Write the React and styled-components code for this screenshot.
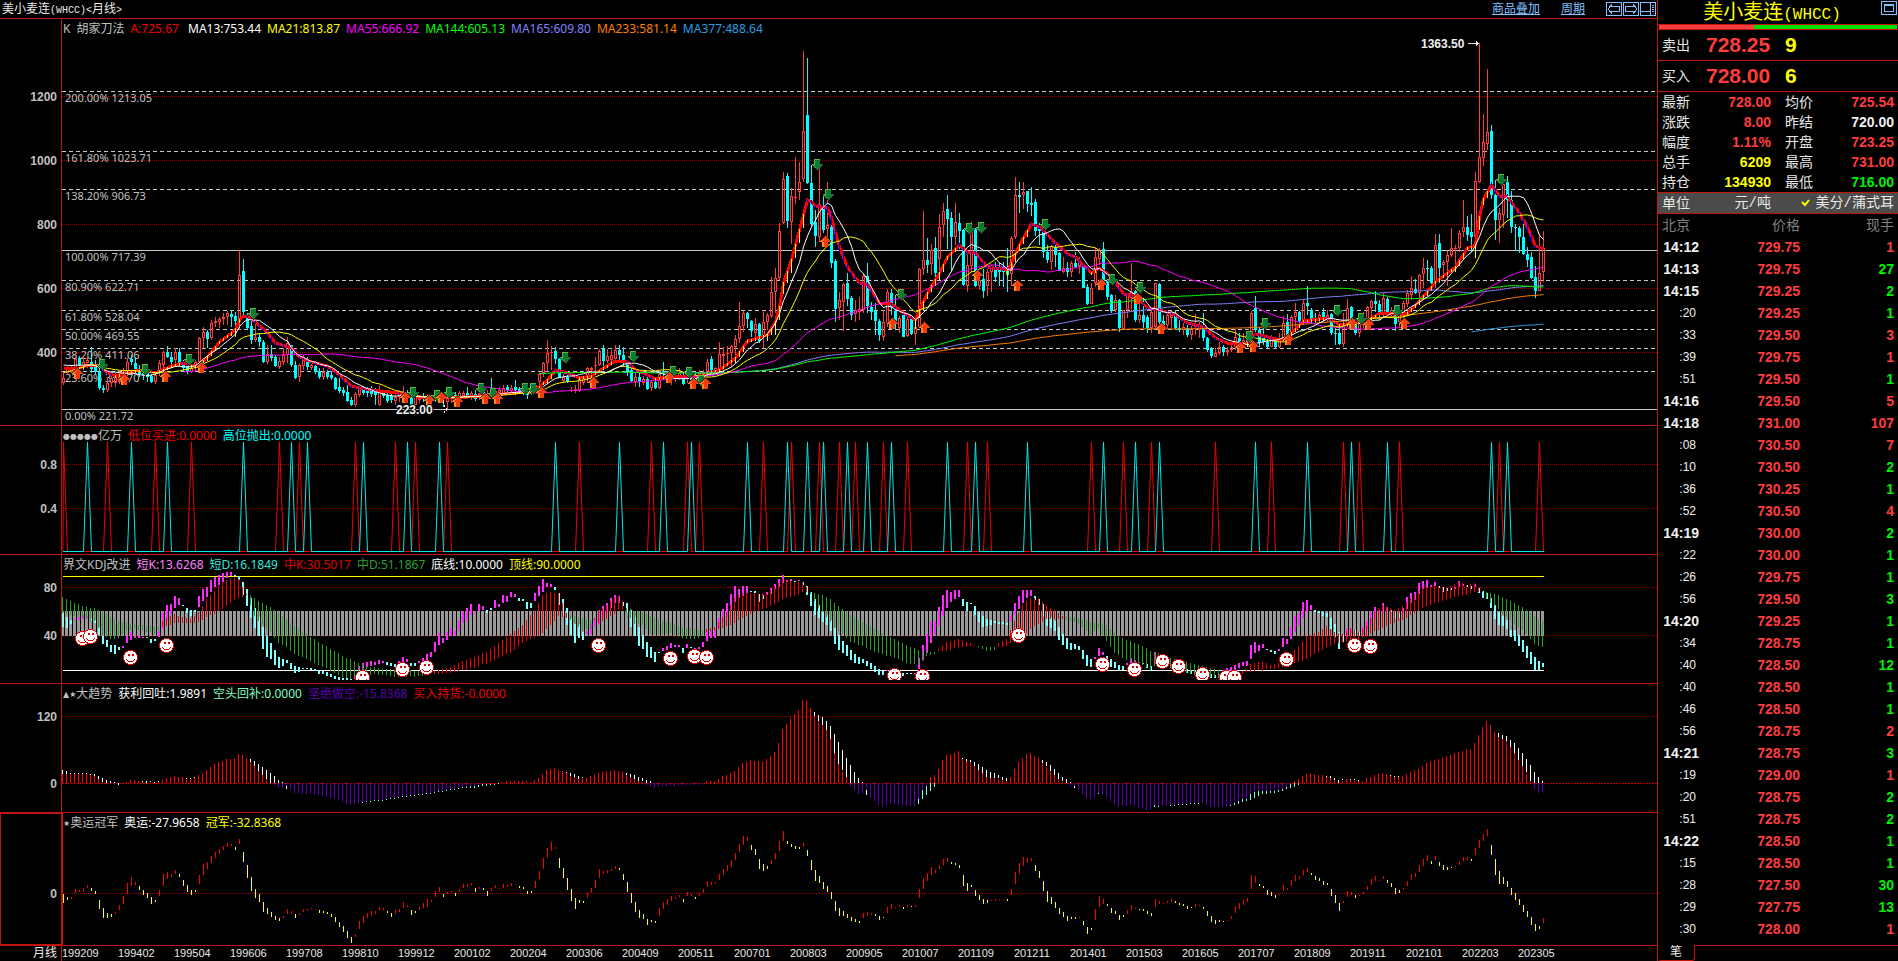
import React from "react";
import styled, { createGlobalStyle, css } from "styled-components";

/* ---------- data ---------- */

const BARS = 371;
const STEP = 4;
const AXIS_WIDTH = 62;

// colour, high, body top, body bottom, low (thirds of a pixel below `base`)
const candleParts = [
  {
    base: 240,
    text: `r395 413 430 435,r378 382 398 404,r375 380 395 400,r350 356 385 390,c348 355 375 385,r345 365 380 390,r350 360 370 385,c322 365 388 398,c360 378 395 402,c370 395 445 450,
c435 445 451 460,r410 430 450 455,r405 415 428 440,r400 410 430 440,r398 405 425 432,r385 395 420 430,r355 365 400 410,c345 357 366 375,c350 368 388 395,c375 390 402 410,
c390 395 405 420,c392 400 412 425,c395 407 425 428,r395 405 425 432,r360 370 400 408,r332 335 375 385,c318 335 352 355,c335 350 365 375,r325 337 360 372,c325 335 368 375,
c360 368 385 395,c365 375 395 402,r380 385 395 400,r360 365 385 392,r290 295 365 380,r262 277 295 325,c270 277 297 325,r240 250 295 300,r230 244 250 262,r230 238 246 265,
r218 230 238 255,r212 220 230 255,c210 222 232 262,c215 228 243 270,r31 105 245 270,c57 93 215 225,c218 225 265 270,c240 258 300 312,r250 290 300 305,c280 290 306 322,
c300 305 367 370,r315 342 365 372,c315 342 355 362,c345 352 378 380,r350 362 382 388,r325 345 365 375,r292 310 345 370,c315 315 375 380,c362 375 413 416,r372 375 412 425,
r345 360 378 390,c350 360 382 390,r365 375 383 390,c362 378 395 402,c385 392 410 418,r385 395 412 420,c390 397 410 418,c385 405 415 420,c410 415 447 450,c415 442 453 460,
c440 450 460 468,c435 455 482 485,c470 480 496 498`,
  },
  {
    base: 290,
    text: `r305 312 345 350,r290 298 315 320,c288 298 308 315,c292 300 308 320,c288 300 312 322,c295 303 315 345,r285 305 345 348,c300 305 318 325,c305 315 332 340,c308 318 330 340,
r310 322 332 345,r300 312 322 335,r288 305 318 330,c300 310 322 330,c305 320 350 352,r310 320 345 350,r315 320 330 340,c310 318 325 335,r312 320 330 345,c315 320 328 335,
c312 318 326 335,r308 318 325 338,c310 318 326 350,r315 320 335 358,r308 316 328 340,c305 315 322 330,r303 310 320 330,r303 308 318 325,c290 308 318 322,r302 310 318 330,
c300 312 328 332,r300 310 320 330,c290 305 315 325,r300 308 318 330,c265 300 315 325,r295 303 315 325,r290 300 310 318,r285 295 308 315,c285 292 300 310,r285 295 302 310,
c270 292 300 305,c290 297 303 308,c292 300 306 315,c292 300 315 328,r290 298 308 315,r278 285 302 308,r248 252 275 295,r215 220 250 260,r150 190 218 245,r168 185 190 240,
c172 184 208 222,c205 208 263 265,r240 262 272 278,c250 262 273 278,r290 299 302 306,r285 298 302 308,r262 268 302 305,r262 265 280 285,r232 235 265 280,r232 235 240 262,
r200 225 228 250,r178 182 225 228,c165 178 212 230,r178 198 212 220,r180 195 210 222,r165 180 208 215,c165 180 195 215,c172 195 218 230,c210 220 245 258,c235 240 272 275,
r250 262 275 292,c240 262 275 290`,
  },
  {
    base: 0,
    text: `r1128 1138 1148 1155,c1130 1137 1167 1170,r1140 1146 1165 1172,c1135 1146 1163 1168,r1120 1122 1163 1168,c1085 1112 1120 1130,r1115 1120 1135 1150,r1115 1125 1135 1155,
r1120 1128 1136 1145,r1105 1120 1130 1140,c1120 1128 1153 1155,r1105 1115 1135 1150,c1105 1120 1140 1150,c1118 1125 1145 1150,r1110 1120 1135 1145,r1110 1115 1130 1140,
r1077 1087 1125 1130,c1068 1077 1110 1115,r1100 1105 1115 1122,r1026 1063 1110 1115,r1040 1063 1068 1095,r1038 1058 1060 1090,r1035 1038 1058 1100,r1005 1017 1040 1090,
r906 978 1017 1030,r932 940 978 995,c935 940 956 985,c960 963 993 1010,r955 972 1000 1015,c968 972 1022 1028,r930 966 1010 1045,r940 946 965 990,r832 877 947 955,
r805 835 875 940,r670 693 835 840,r516 538 668 672,c520 528 662 684,r565 588 665 732,r471 591 593 612,r486 546 575 600,r153 394 536 545,c173 345 549 552,c495 549 672 678,
c630 667 707 740,r507 612 712 725,c585 628 690 698,r546 675 688 720,c675 682 788 805,c778 783 927 965,r876 900 925 960,r850 852 905 992,c820 849 897 917,c888 894 945 960,
r900 930 943 965,r892 928 935 960,r820 828 930 940,c790 828 918 938,c905 922 936 960,c908 932 963 1005,c958 962 1005 1022,r930 966 1010 1022,r867 877 968 980,c868 878 920 945,
c885 933 970 990,r948 955 985 998,c940 946 1010 1012,r950 957 1007 1012,c945 957 1002 1006,r972 980 1003 1034,r804 807 980 985,r633 780 808 825,c714 780 795 818,r732 750 793 825,
c711 744 820 850,r642 682 778 820,r609 633 675 712,c585 627 657 748,c636 654 711 815,r609 666 712 735,c639 669 693 748,c687 690 854 857,r762 796 858 875,r666 693 798 815,
c683 685 858 862,r825 840 857 870,c808 838 873 893,r808 815 858 888,r795 800 815 875,c785 800 830 845,c790 800 815 858,c785 800 815 862,c745 800 825 875,r708 714 823 857,
r531 585 710 717,c546 585 590 640,r546 577 584 628,c573 573 612 636,c561 609 614 648,c597 606 693 708,c670 688 694 735,c690 695 755 773,c735 755 780 790,r735 737 785 810,
c735 740 766 800,c757 760 812 812,r770 805 815 820,c785 805 815 830,r782 790 815 830,c757 790 800 805,r770 780 797 822,c790 797 863 865,c852 862 912 915,r850 865 911 912,
r745 772 850 860,r745 750 777 795,c726 747 843 870,c840 842 890 900,c882 885 932 940,r885 900 930 935,c897 900 984 995,r930 930 988 990,r880 880 930 955,r790 875 895 935,
c870 873 960 965,r905 945 960 970,c895 945 965 985,c945 950 985 998,r930 935 985 1000,r848 850 980 985,c850 853 965 980,c945 963 980 990,r940 945 975 985,r935 945 955 985,
c930 945 985 990,c960 985 990 995,r970 980 990 1005,c970 985 1005 1012,r970 985 1005 1020,r942 975 980 1005,r965 975 990 1015,c938 980 1015 1022,c1010 1015 1050 1055,
c1040 1048 1068 1074,r1045 1060 1070 1072,r1025 1042 1060 1065,c1035 1042 1055 1068,r1040 1050 1055 1068,r1030 1040 1050 1055,r988 1012 1040 1050,c1000 1015 1030 1040,
r1000 1020 1035 1045,c1000 1020 1035 1040,r932 938 1030 1035,c888 923 990 1000,c980 990 1030 1040,c985 1015 1025 1035,c1010 1025 1040 1045,r1005 1015 1040 1042,
c1010 1015 1040 1048,r1000 1015 1040 1045,r948 970 1015 1025,c942 965 1005 1015,r945 950 995 1005,r909 936 950 985,c932 935 963 985,r900 910 965 975,c858 908 918 945,
c925 930 960 970,c940 955 962 970,r935 945 958 965,c925 935 950 960,r930 945 955 965,c940 943 1000 1005,c985 998 1002 1035,c980 1000 1032 1035,r940 970 1032 1040,
r897 925 975 980,c918 922 960 975,c960 965 1000 1005,r965 970 998 1010,r935 955 975 985,r918 922 960 970,r900 903 925 965,c873 903 912 935,c900 912 940 960,r878 895 945 955,
c892 897 935 940,r920 930 945 955,c930 943 972 992,r930 940 965 980,r903 910 945 960,r870 880 912 920,r828 865 885 900,c838 868 880 882,r822 825 880 895,r774 805 822 865,
c780 805 808 840,c798 804 848 855,r702 735 850 865,c702 729 805 850,r780 787 795 830,r752 766 787 858,r684 745 766 770,r735 745 748 815,r690 700 745 755,r600 682 697 710,
c648 682 705 722,c642 697 712 755,r516 543 712 720,r129 472 545 548,r342 427 475 497,r207 397 433 450,c375 394 585 597,c540 585 661 720,r625 640 661 728,r550 553 645 685,
c528 547 600 655,c573 600 680 700,c672 680 684 750,c678 684 710 760,c667 712 763 765,c740 762 780 800,c755 770 833 838,c798 832 872 893,r705 820 872 873,r693 745 817 845`,
  },
];

const candles = candleParts.flatMap(({ base, text }) =>
  text
    .split(",")
    .map((s) => s.trim())
    .map((s) => {
      const [high, top, bottom, low] = s
        .slice(1)
        .split(" ")
        .map((v) => Math.round(base + Number(v) / 3));
      return { up: s[0] === "r", high, top, bottom, low };
    })
);

// closes before the first visible bar, so that the averages start full
const history = [...Array(11).fill(388), ...Array(13).fill(364)];
const closes = [
  ...history,
  ...candles.map((c) => (c.up ? c.top : c.bottom)),
];

const average = (n) => {
  const points = [];
  for (let i = 0; i < BARS; i++) {
    const end = i + history.length + 1;
    if (end < n) continue;
    const sum = closes.slice(Math.max(0, end - n), end).reduce((a, b) => a + b, 0);
    points.push(`${63.5 + STEP * i},${(sum / n).toFixed(1)}`);
  }
  return points.join(" ");
};

// fills the bars between the given points
const fill = (rows) => {
  const out = [];
  for (let k = 0; k < rows.length; k++) {
    const a = rows[k];
    const b = rows[k + 1];
    out[a[0]] = a.slice(1);
    if (!b) break;
    for (let i = Math.ceil(a[0]); i < b[0]; i++) {
      const t = (i - a[0]) / (b[0] - a[0]);
      out[i] = a.slice(1).map((v, j) => v + (b[j + 1] - v) * t);
    }
  }
  return out;
};

const rowsOf = (text, base, scale) =>
  text.split(",").map((s) => {
    const n = s.trim().split(" ").map(Number);
    const p = base + n[1] / scale;
    return [n[0], p, n.length > 2 ? base + n[2] / scale : p];
  });

const ribbon = fill(
  `0 368,4 368,6 365,9 366,11 373,13 376,16 372,20 370,23 373,27 366,30 363,32 366,34 365,36 357,39 342,42 333,43 329,44 320,45 316,46 316,48 322,51 333,53 343,57 348,59 357,62 362,66 366,69 375,72 386,74 388,79 391,84 393,89 397,95 397,101 397,107 395,113 393,118 390,121 380,123 370,126 373,129 378,132 376,135 368,138 361,141 362,143 370,146 375,148 379,151 377,159 376,164 370,168 358,171 341,176 335,178 322,179 307,180 283,182 260,184 230,186 200,187 202,188 206,191 208,192 218,194 247,196 267,199 283,201 285,203 297,204 303,207 304,210 313,213 320,214 310,216 293,219 273,221 257,224 245,226 252,228 253,231 267,236 270,237 263,239 245,242 224,244 227,247 239,251 254,253 257,257 273,259 268,262 277,265 294,268 296,271 308,274 310,278 315,281 323,285 327,288 338,291 343,296 343,298 334,303 339,305 339,307 333,310 321,316 318,319 325,326 321,329 313,336 313,339 301,343 282,348 267,351 248,353 245,354 217,355 199,357 185,359 196,361 197,364 213,366 227,368 246,370 249`
    .split(",")
    .map((s) => s.split(" ").map(Number))
).map((p) => p[0]);

const shortKD = fill([
  ...rowsOf(
    `0 203 160,1 203 170,2 192 180,3 177 180,5 165 177,6 167 173,7 183 175,8 188 180,9 225 200,10 252 228,11 262 240,12 277 255,13 283 255,14 272 262,15 257 263,16 228 250,17 215 238,18 228 235,20 230 233,21 235 231,22 248 237,23 243 237,24 213 230,25 155 205,26 135 180,27 132 165,28 108 145,29 115 137,30 138 135,31 160 145,32 168 150,33 155 150,34 108 140,35 88 123,36 80 110,37 60 95,38 52 83,39 45 75,40 40 66,41 36 55,42 37 48,43 48 45,44 60 48,45 105 65,46 137 87,47 175 115,48 205 145,49 228 170,50 265 200,51 290 228,52 298 250,53 315 270,54 323 290,55 320 298,56 308 300,57 325 308,58 338 318,59 336 322,60 328 324,63 331 326,64 340 332,65 342 332,66 348 337,67 352 342,68 355 347,69 360 350,70 360 353,71 363 355,72 362 357,73 352 357,74 318 330,75 310 330,76 305 320,77 303 318,78 305 315,79 300 312,80 303 308,81 313 305,82 318 310,83 320 312,84 303 315,85 290 308,86 298 306,87 318 308,88 318 308,89 303 310,90 295 308,91 282 300,92 276 290,93 246 275,94 220 257,95 235 250,96 215 240,97 205 230,98 213 225,99 183 212,100 153 190,101 145 183,102 132 165,103 157 160,104 132 152,105 137 150,106 158 150,107 150 143,108 120 145,109 132 140,110 105 130,111 107 125,112 96 110,113 102 110,114 122 113,115 125 118,116 145 125,117 143 128,118 98 122,119 78 108,120 57 95,121 70 82,122 72 80,123 90 80,124 135 98`,
    560,
    3
  ),
  ...rowsOf(
    `125 570 520,126 595 545,127 625 575,128 645 590,129 632 590,130 638 615,131 612 622,132 590 620,133 580 600,134 550 590,135 540 575,136 530 560,137 515 545,138 507 530,139 510 530,140 540 528,141 560 530,142 600 550,143 625 570,144 655 600,145 663 623,146 687 643,147 690 658,148 700 672,149 675 671,150 661 670,151 655 666,152 646 660,153 652 658,154 652 657,155 675 661,156 649 661,157 661 657,159 658 663,160 643 658,161 612 642,162 608 632,163 605 632,164 575 607,165 548 585,166 530 570,167 505 550,168 481 527,169 490 515,170 481 510,171 481 500,172 499 495,173 502 495,174 525 503,175 519 508,176 498 507,177 487 503,178 475 490,179 461 483,180 449 472,181 463 470,182 461 468,183 470 466,184 463 467,185 478 470,186 507 480,187 540 499,188 565 518,189 573 536,190 585 555,191 595 565,192 613 580,193 650 603,194 667 623,195 675 640,196 683 652,197 697 667,198 703 678,199 707 687,200 704 692,201 712 698,202 722 704,203 730 713,204 738 722,205 738 726,206 724 727,208 738 732,210 741 733,211 736 732,212 736 732,213 732 736,214 690 722,215 652 695,216 620 675,217 585 645,218 583 625,219 542 597,220 507 567,221 493 545,222 499 527,223 493 518,224 493 513,225 538 519,226 553 528,227 533 530,228 565 540,229 585 555,230 600 568,231 597 577,232 594 580,233 590 583,236 592 587,237 565 583,238 530 565,239 510 547,240 493 530,241 493 517,242 493 510,243 522 510,244 535 518,245 568 533,246 597 555,247 603 570,248 613 583,249 638 600,250 652 620,251 663 632,252 664 645,253 664 650,254 668 655,255 692 667,256 712 681,257 715 692,258 687 692,259 661 683,260 672 680,261 695 684,262 715 693,263 718 702,264 729 711,265 725 713,266 705 712,267 690 705,270 708 704,271 718 706,272 727 712,273 672 693,274 690 700,276 702 706,279 722 712,281 735 722,284 732 726,287 748 735,288 748 738,290 725 740,293 710 725,294 705 720,295 700 713,296 698 713,297 652 693,298 643 675,299 652 668,300 650 663,301 668 664,302 672 667,303 678 670,304 664 670,305 632 657,306 635 650,307 600 635,308 568 613,309 560 597,310 527 573,311 522 558,312 536 550,313 557 551,314 558 553,315 567 556,316 571 560,317 606 573,318 628 590,319 663 615,320 642 623,321 603 628,322 605 618,323 628 610,324 627 615,325 600 620,326 583 608,327 555 592,328 541 575,329 550 563,330 530 555,331 541 553,332 557 550,333 575 555,334 575 560,335 545 560,336 513 547,337 501 530,338 498 520,339 472 505,340 466 490,341 463 485,342 477 484,343 469 482,344 488 481,345 498 484,346 496 487,347 493 486,348 483 490,349 466 482,350 474 480,351 485 479,352 488 480,353 475 483,354 503 488,355 515 495,356 518 500,357 545 515,358 577 535,359 594 555,360 597 567,361 606 580,362 627 608,363 640 608,364 655 623,365 674 638,366 690 655,367 707 672,368 725 686,369 725 698,370 716 704`,
    420,
    2.898
  ),
]);

const midKD = fill([
  ...rowsOf(
    `0 160 111,3 170 130,6 175 140,8 185 145,10 225 155,12 235 170,14 235 183,16 210 190,18 205 192,20 210 195,23 220 200,24 210 200,25 183 200,26 175 200,28 163 190,30 170 187,32 178 190,34 155 185,36 118 172,38 92 160,40 65 145,42 53 127,44 57 113,46 103 107,47 135 105,48 170 115,50 193 128,52 218 142,54 250 160,56 262 178,58 282 198,60 290 215,62 303 230,64 315 245,66 325 258,68 340 273,70 350 287,72 357 298,74 345 308,76 343 317,78 343 322,80 345 327,82 348 328,86 350 330,90 348 333,91 345 335,92 335 342,94 330 342,97 320 337,100 303 330,103 290 322,106 275 310,109 250 295,112 222 278,115 195 250,118 150 230,120 105 220,122 95 195,124 100 170`,
    560,
    3
  ),
  ...rowsOf(
    `126 560 575,127 580 565,130 610 575,132 605 580,133 575 582,134 552 590,136 535 575,138 512 560,139 510 550,140 525 550,141 560 545,143 590 553,145 592 555,147 618 567,149 623 578,152 618 588,155 632 600,158 635 605,160 625 610,161 607 615,163 600 610,164 585 605,166 557 598,168 515 588,170 500 572,173 500 555,176 502 545,178 482 533,180 462 520,183 470 510,185 470 500,186 485 500,187 505 498,189 545 503,192 585 518,194 612 540,197 642 565,200 655 585,203 673 605,206 682 625,209 693 640,212 707 657,214 710 666,216 685 670,218 677 672,219 665 670,221 643 668,224 636 660,227 645 655,228 652 656,229 658 655,231 670 657,233 667 658,234 647 660,236 635 655,238 583 640,240 535 630,242 515 605,244 515 590,246 537 577,248 550 575,250 567 575,251 580 570,254 590 573,257 623 585,259 605 588,261 640 595,263 675 615,265 690 632,267 698 641,270 710 655,272 722 668,274 700 675,276 712 685,279 725 695,282 738 705,285 738 712,287 745 720,290 748 727,292 740 728,294 728 738,296 725 732,297 708 730,300 700 725,302 710 722,304 705 720,306 690 712,309 655 702,311 625 692,314 615 672,316 598 660,318 615 650,320 620 645,322 603 637,324 615 635,326 595 630,328 553 612,330 537 603,333 550 587,335 540 580,337 515 565,340 485 547,343 480 530,346 485 520,349 470 510,351 477 505,353 472 497,354 485 500,355 498 495,357 530 500,360 560 512,363 590 530,366 620 550,368 650 568,370 658 583`,
    420,
    2.898
  ),
]);

const trend = fill(
  rowsOf(
    `0 1025 1013,2 1026 1022,5 1026 1023,7 1027 1025,8 1032 1026,10 1048 1037,12 1056 1047,14 1058 1052,15 1053,17 1043,19 1046,21 1051 1046,23 1052 1049,25 1042,28 1031,30 1036,32 1041 1038,34 1030,36 1015,38 997,41 983,43 982,44 968,45 970,46 980,47 990 982,48 1003 988,50 1028 1005,52 1052 1022,54 1066 1042,55 1066 1050,57 1070,58 1080,60 1083,63 1085,66 1092,69 1100,71 1112,72 1116,74 1110,76 1105 1108,80 1100 1102,85 1090 1093,90 1084 1087,95 1074 1078,100 1065 1069,105 1056 1061,109 1053 1056,110 1049,112 1046,117 1048,119 1038,121 1015,123 1009,125 1018,127 1030 1022,129 1040 1032,131 1038,133 1028,135 1020,138 1014,140 1020,142 1035 1025,144 1045 1034,145 1048 1038,146 1057 1042,147 1060 1046,148 1066,150 1060,156 1059,160 1056,161 1046,163 1045,165 1033,168 1017,170 995,172 986,175 990,177 975,178 962,179 936,180 896,182 864,184 841,185 812,186 814,187 835,188 858 846,190 883 861,191 897 872,192 925 887,193 965 910,194 997 934,196 1035 980,197 1060 1000,198 1071 1020,199 1083 1038,200 1080 1050,202 1095,204 1115,205 1121,207 1109,209 1115,211 1120,213 1118,214 1097 1112,215 1073 1100,216 1060 1086,217 1035 1075,218 1030 1065,219 1010,220 986,221 972,224 960,225 982 980,227 992 985,229 1014 997,231 1033 1013,234 1040 1030,236 1046 1038,237 1036,238 1010,239 990,241 968,242 965,244 980,245 993 985,247 1018 1000,249 1038 1022,250 1048 1035,252 1060 1048,254 1071,256 1095,257 1101,259 1082 1084,260 1083,262 1103,264 1122,267 1115,269 1124,271 1130,272 1130,273 1115 1121,275 1120,279 1113 1116,283 1110 1113,285 1110,286 1116,287 1121,291 1121,293 1110 1117,295 1098 1107,296 1098 1105,297 1083 1100,298 1077 1095,300 1076 1085,304 1073 1078,306 1063 1070,308 1045 1063,309 1041 1057,310 1031,311 1025,315 1029,317 1038 1032,319 1050 1042,321 1041,323 1045 1041,325 1045,326 1038,328 1030,330 1022,333 1034 1031,335 1032,337 1020,339 1010,341 994,343 984,345 980,347 970,349 962,351 954,352 956,353 936,354 913,355 890,356 872,357 885,358 905,359 918 907,361 930 916,362 948 927,363 965 936,365 1003 965,366 1022 983,367 1045 1000,368 1070 1020,369 1080 1036,370 1078 1046`,
    420,
    2.898
  )
);

const champion =
  `0y1373-1399,1y1383-1391,2r1383-1387,3r1360-1372,4r1361-1369,5r1355-1368,6r1348-1356,7y1355-1366,8y1365-1374,9y1390-1418,10y1413-1443,11y1428-1443,12y1432-1439,13r1425-1433,14r1406-1420,15r1380-1403,16r1342-1373,17r1325-1350,18r1339-1348,19y1350-1363,20y1362-1377,21y1370-1385,22y1383-1403,23y1390-1397,24r1362-1379,25r1316-1350,26r1310-1330,27r1315-1323,28r1303-1315,29y1315-1325,30y1333-1350,31y1348-1368,32y1362-1377,33y1361-1368,34r1318-1345,35r1287-1318,36r1280-1300,37r1264-1284,38r1252-1270,39r1243-1257,40r1235-1246,41r1226-1238,42r1229-1235,43y1238-1246,44r1214-1229,45y1252-1281,46y1290-1327,47y1325-1365,48y1360-1385,49y1373-1398,50y1398-1425,51y1413-1433,52y1425-1441,53y1438-1449,54y1443-1452,55r1438-1443,56r1417-1432,57r1422-1432,58y1432-1443,59r1428-1435,60r1416-1426,61r1417-1423,62r1414-1418,63r1416-1419,64y1420-1429,65y1422-1429,66y1425-1432,67y1432-1440,68y1440-1455,69y1455-1470,70y1467-1483,71y1480-1502,72y1498-1516,73r1490-1498,74r1452-1475,75r1438-1457,76r1430-1443,77r1424-1436,78r1422-1433,79r1410-1420,80r1414-1420,81y1422-1430,82y1428-1440,83r1420-1432,84r1416-1426,85r1397-1413,86r1405-1412,87y1420-1435,88y1423-1430,89r1412-1420,90r1400-1414,91r1387-1410,92r1390-1397,93r1365-1382,94r1354-1368,95y1373-1383,96r1368-1374,97r1365-1370,98y1371-1378,99r1358-1368,100r1346-1355,101r1344-1353,102r1341-1348,103y1355-1367,104r1352-1358,105y1355-1363,106y1365-1378,107r1357-1365,108r1348-1357,109r1355-1359,110r1345-1355,111r1348-1353,112r1342-1350,113r1345-1349,114y1350-1355,115y1352-1358,116y1365-1374,117y1364-1370,118r1335-1357,119r1307-1330,120r1270-1300,121r1240-1270,122r1223-1248,123r1237-1243,124y1270-1298,125y1297-1327,126y1327-1361,127y1358-1393,128y1385-1416,129y1390-1400,130y1393-1399,131r1370-1385,132r1355-1370,133r1333-1355,134r1300-1328,135r1306-1315,136r1304-1312,137r1301-1307,138r1293-1300,139y1297-1304,140y1316-1332,141y1338-1368,142y1370-1400,143y1397-1427,144y1420-1443,145y1432-1445,146y1446-1463,147y1449-1455,148y1452-1458,149r1414-1438,150r1398-1416,151r1388-1406,152r1380-1394,153r1381-1387,154r1377-1383,155y1388-1396,156r1368-1378,157r1373-1380,158y1383-1388,159r1372-1380,160r1359-1372,161r1336-1354,162r1339-1347,163r1339-1345,164r1316-1333,165r1300-1320,166r1290-1308,167r1274-1294,168r1255-1275,169r1228-1252,170r1206-1232,171r1209-1220,172y1232-1246,173y1243-1260,174y1272-1300,175y1287-1307,176y1293-1300,177r1275-1287,178r1255-1272,179r1220-1250,180r1191-1220,181y1220-1229,182y1229-1238,183y1235-1243,184y1238-1243,185r1226-1236,186y1246-1264,187y1275-1304,188y1304-1336,189y1322-1342,190y1339-1358,191y1351-1368,192y1368-1388,193y1394-1423,194y1414-1438,195y1423-1438,196y1432-1443,197y1440-1452,198y1446-1455,199y1452-1458,200r1429-1443,201r1426-1437,202r1429-1435,203y1432-1438,204y1438-1449,205y1440-1443,206r1411-1429,207r1403-1416,208r1411-1414,209r1406-1411,210y1411-1417,211r1406-1411,212y1409-1411,213r1406-1411,214r1359-1385,215r1327-1358,216r1313-1336,217r1296-1320,218r1304-1313,219r1290-1300,220r1272-1290,221r1269-1280,222y1281-1287,223y1284-1290,224y1290-1298,225y1319-1351,226y1342-1365,227y1348-1354,228y1362-1380,229y1377-1391,230y1388-1403,231y1391-1400,232r1391-1394,233r1388-1393,234r1388-1391,235r1388-1391,236y1388-1394,237r1359-1377,238r1310-1345,239r1284-1316,240r1267-1293,241r1269-1284,242r1269-1278,243y1290-1307,244y1307-1327,245y1336-1365,246y1365-1397,247y1383-1403,248y1397-1414,249y1414-1432,250y1426-1440,251y1438-1452,252y1440-1446,253y1440-1446,254r1440-1443,255y1452-1464,256y1469-1490,257y1472-1478,258r1417-1449,259r1380-1412,260r1388-1403,261y1403-1409,262y1414-1429,263y1423-1432,264y1435-1449,265y1435-1440,266r1420-1432,267r1406-1420,268r1413-1416,269y1417-1420,270y1418-1423,271y1423-1432,272y1429-1438,273r1388-1411,274r1394-1403,275r1400-1403,276r1394-1400,277r1388-1397,278y1394-1400,279y1400-1406,280y1403-1409,281y1409-1417,282y1411-1414,283r1403-1411,284r1406-1409,285y1411-1417,286y1423-1438,287y1438-1455,288y1449-1461,289y1449-1455,290y1452-1455,291r1449-1452,292r1438-1446,293r1409-1429,294r1400-1417,295r1391-1406,296r1385-1397,297r1319-1359,298r1322-1342,299y1345-1351,300y1351-1356,301y1362-1377,302y1368-1380,303y1377-1385,304r1373-1377,305r1348-1365,306r1356-1362,307r1333-1351,308r1319-1336,309r1322-1330,310r1304-1319,311r1298-1310,312y1313-1319,313y1322-1333,314y1327-1336,315y1336-1348,316y1342-1348,317y1359-1380,318y1377-1400,319y1400-1423,320r1394-1400,321r1365-1383,322r1368-1377,323y1377-1385,324r1377-1380,325r1368-1373,326r1351-1362,327r1330-1348,328r1322-1336,329r1333-1336,330r1322-1330,331y1333-1342,332y1342-1354,333y1356-1374,334y1362-1371,335r1356-1362,336r1336-1351,337r1316-1333,338r1313-1325,339r1290-1310,340r1272-1293,341r1261-1278,342y1278-1287,343r1264-1275,344y1281-1293,345y1290-1304,346y1296-1304,347y1296-1298,348r1293-1296,349r1278-1290,350r1267-1278,351r1267-1275,352y1272-1278,353r1240-1261,354r1217-1240,355r1200-1220,356r1185-1206,357y1232-1261,358y1272-1319,359y1307-1345,360y1325-1345,361y1336-1354,362y1356-1377,363y1371-1391,364y1388-1406,365y1406-1426,366y1423-1440,367y1440-1464,368y1461-1481,369y1467-1475,370r1443-1458`
    .split(",")
    .map((s) => {
      const [, i, color, a, b] = s.match(/(\d+)([ry])(\d+)-(\d+)/);
      const top = Math.round(420 + a / 2.898);
      const bottom = Math.round(420 + b / 2.898);
      return { i: Number(i), up: color === "r", top, height: Math.max(1, bottom - top) };
    });

const buySpikes = [0, 11, 23, 32, 54, 59, 73, 83, 88, 96, 129, 147, 156, 159, 175, 182, 189, 194, 198, 205, 211, 226, 231, 257, 265, 272, 288, 302, 320, 324, 334, 359, 369];
const sellSpikes = [6, 17, 26, 45, 57, 61, 75, 86, 94, 123, 139, 150, 157, 171, 181, 186, 190, 196, 201, 207, 221, 228, 241, 260, 268, 274, 298, 311, 322, 331, 357, 361];

const faces = [[82, 638], [90, 636], [130, 657], [166, 645], [362, 677], [402, 669], [426, 667], [598, 645], [670, 658], [694, 656], [706, 657], [894, 675], [922, 676], [1018, 635], [1102, 664], [1134, 669], [1162, 661], [1178, 666], [1202, 674], [1226, 677], [1234, 677], [1286, 659], [1354, 645], [1370, 646]];

const downArrows = [[102, 364], [145, 369], [189, 359], [253, 313], [413, 392], [437, 395], [449, 392], [481, 388], [493, 393], [525, 388], [533, 388], [565, 357], [633, 356], [673, 371], [689, 372], [701, 380], [817, 164], [828, 194], [901, 294], [969, 228], [981, 227], [1045, 224], [1112, 279], [1140, 287], [1249, 336], [1265, 323], [1337, 310], [1361, 318], [1397, 310], [1501, 179]];
const upArrows = [[77, 374], [124, 380], [165, 377], [201, 368], [405, 398], [429, 401], [441, 398], [457, 402], [485, 399], [497, 399], [541, 393], [593, 383], [669, 378], [693, 384], [705, 384], [825, 242], [892, 324], [924, 328], [977, 276], [1017, 286], [1101, 285], [1137, 299], [1161, 329], [1240, 348], [1253, 347], [1288, 340], [1352, 324], [1368, 325], [1404, 324]];

const fibs = [
  [91, "200.00% 1213.05"],
  [151, "161.80% 1023.71"],
  [189, "138.20% 906.73"],
  [250, "100.00% 717.39", true],
  [280, "80.90% 622.71"],
  [310, "61.80% 528.04"],
  [329, "50.00% 469.55"],
  [348, "38.20% 411.06"],
  [371, "23.60% 338.70"],
  [409, "0.00% 221.72", true],
];

const dates = ["199209", "199402", "199504", "199606", "199708", "199810", "199912", "200102", "200204", "200306", "200409", "200511", "200701", "200803", "200905", "201007", "201109", "201211", "201401", "201503", "201605", "201707", "201809", "201911", "202101", "202203", "202305"];

const averages = [
  [233, "#ff8000"],
  [377, "#2a9fe0"],
  [165, "#8080ff"],
  [144, "#00ff00"],
  [55, "#ff00ff"],
  [21, "#ffff00"],
  [13, "#ffffff"],
];

const quotes = [
  ["最新", "728.00", "up", "均价", "725.54", "up"],
  ["涨跌", "8.00", "up", "昨结", "720.00", "flat"],
  ["幅度", "1.11%", "up", "开盘", "723.25", "up"],
  ["总手", "6209", "volume", "最高", "731.00", "up"],
  ["持仓", "134930", "volume", "最低", "716.00", "down"],
];

const ticks = `14:12 729.75 1 r,14:13 729.75 27 g,14:15 729.25 2 g,:20 729.25 1 g,:33 729.50 3 r,:39 729.75 1 r,:51 729.50 1 g,14:16 729.50 5 r,14:18 731.00 107 r,:08 730.50 7 r,:10 730.50 2 g,:36 730.25 1 g,:52 730.50 4 r,14:19 730.00 2 g,:22 730.00 1 g,:26 729.75 1 g,:56 729.50 3 g,14:20 729.25 1 g,:34 728.75 1 g,:40 728.50 12 g,:40 728.50 1 g,:46 728.50 1 g,:56 728.75 2 r,14:21 728.75 3 g,:19 729.00 1 r,:20 728.75 2 g,:51 728.75 2 g,14:22 728.50 1 g,:15 728.50 1 g,:28 727.50 30 g,:29 727.75 13 g,:30 728.00 1 r`
  .split(",")
  .map((s) => s.split(" "));

/* ---------- chart pieces ---------- */

// lines start left of the plot's shift, so they run past its right edge and are clipped there
const Grid = ({ lines }) =>
  lines.map((y) => (
    <line key={y} x1="62" x2="110%" y1={y + 0.5} y2={y + 0.5} stroke="#a00000" strokeDasharray="1 1" />
  ));

// every plot is drawn in screen coordinates and shifted to its own corner
const Plot = ({ top, height, children }) => (
  <StPlot height={height} shapeRendering="crispEdges">
    <g transform={`translate(${-AXIS_WIDTH},${-top})`}>{children}</g>
  </StPlot>
);

const Arrow = ({ x, y, up }) => (
  <g transform={`translate(${x},${y})${up ? " scale(1,-1)" : ""}`}>
    <path d="M-2-4h5v5h3l-6 6-5-6h3z" fill="#3a2410" />
    <path d="M-3-5h6v5h3l-6 6-6-6h3z" fill={up ? "#f03c10" : "#0a7a34"} />
    <path d={up ? "M-3-5h2v5h-2l2 3-5-3h3z" : "M-3-5h6v1h-5v5h-2l3 3-5-4h3z"} fill={up ? "#ff8c1a" : "#5fb83c"} />
  </g>
);

const Face = ({ x, y }) => (
  <g transform={`translate(${x + 1},${y})`}>
    <path d="M-3-7h5v1h2v1h1v1h1v2h1v5h-1v2h-1v1h-1v1h-2v1h-5v-1h-2v-1h-1v-1h-1v-2h-1v-5h1v-2h1v-1h1v-1h2z" fill="#e00" />
    <path d="M-3-6h5v1h2v1h1v2h1v5h-1v2h-1v1h-2v1h-5v-1h-2v-1h-1v-2h-1v-5h1v-2h1v-1h2z" fill="#fff" />
    <path d="M-3-3h2v2h-2zM1-3h2v2h-2zM-5 2h1v1h1v1h5v-1h1v-1h1v1h-1v1h-1v1h-5v-1h-1v-1h-1z" fill="#d00" />
  </g>
);

const spikePath = (list) => {
  const points = [`${63},551.5`];
  list.forEach((i) => {
    const x = 63.5 + STEP * i;
    points.push(`${Math.max(63, x - STEP)},551.5`, `${x},442`, `${x + STEP},551.5`);
  });
  points.push("1544,551.5");
  return points.join(" ");
};

const PriceChart = () => (
  <Plot top={19} height={406}>
    <Grid lines={[96, 160, 224, 288, 352]} />
    {fibs.map(([y, label, solid]) => (
      <g key={label}>
        <line x1="62" x2="110%" y1={y + 0.5} y2={y + 0.5} stroke="#c8c8c8" strokeDasharray={solid ? undefined : "4 3"} />
        <StFibText x="65" y={y + 11}>
          {label}
        </StFibText>
      </g>
    ))}
    {candles.map((c, i) => {
      const x = 62 + STEP * i;
      const h = Math.max(1, c.bottom - c.top);
      return c.up ? (
        <g key={i} fill="#ff3c3c">
          <rect x={x + 1} y={c.high} width="1" height={Math.max(0, c.top - c.high)} />
          <rect x={x + 1} y={c.bottom} width="1" height={Math.max(0, c.low - c.bottom)} />
          <path d={`M${x} ${c.top}h3v${h}h-3zM${x + 1} ${c.top + 1}v${Math.max(0, h - 2)}h1v${-Math.max(0, h - 2)}z`} fillRule="evenodd" />
        </g>
      ) : (
        <g key={i} fill="#00ffff">
          <rect x={x + 1} y={c.high} width="1" height={Math.max(1, c.low - c.high)} />
          <rect x={x} y={c.top} width="3" height={h} />
        </g>
      );
    })}
    <polyline fill="none" stroke="#ff0000" strokeWidth="3" points={ribbon.map((y, i) => `${63.5 + STEP * i},${y}`).join(" ")} />
    {ribbon.map((y, i) => {
      const next = ribbon[Math.min(i + 1, BARS - 1)];
      const rise = y - next;
      if (Math.abs(rise) < 0.5) return null;
      const size = Math.min(14, Math.max(3, Math.abs(rise)));
      return (
        <rect key={i} x={63 + STEP * i} y={Math.round(y - (rise > 0 ? 1 : size / 2))} width="1" height={Math.round(size)} fill={rise > 0 ? "#ffff00" : "#0000ff"} />
      );
    })}
    <g fill="none" shapeRendering="auto">
      {averages.map(([n, color]) => (
        <polyline key={n} points={average(n)} stroke={color} />
      ))}
    </g>
    {downArrows.map(([x, y]) => (
      <Arrow key={x} x={x} y={y} />
    ))}
    {upArrows.map(([x, y]) => (
      <Arrow key={x} x={x} y={y} up />
    ))}
    <StMarkText x="1421" y="48">
      1363.50
    </StMarkText>
    <path d="M1468 43.5h11M1476.5 41v5M1477.5 42v3" stroke="#e8e8e8" />
    <StMarkText x="396" y="414">
      223.00
    </StMarkText>
    <path d="M443.5 400v3M444.5 405v2M444 409.5h2M446.5 408v3M444.5 411v2" stroke="#e8e8e8" />
  </Plot>
);

const SpikeChart = () => (
  <Plot top={426} height={128}>
    <Grid lines={[464, 508]} />
    <g fill="none" shapeRendering="auto">
      <polyline points={spikePath(buySpikes)} stroke="#f00000" />
      <polyline points={spikePath(sellSpikes)} stroke="#00e8e8" />
    </g>
  </Plot>
);

const KdjChart = () => (
  <Plot top={555} height={125}>
    <Grid lines={[587, 635]} />
    {shortKD.map((_, i) => (
      <rect key={i} x={61 + STEP * i} y="611" width="3" height="25" fill="#999" />
    ))}
    <rect x="63" y="576" width="1481" height="1" fill="#ffff00" />
    <rect x="63" y="670" width="1481" height="1" fill="#ffffff" />
    {shortKD.map(([k, d], i) => (
      <rect key={i} x={62 + STEP * i} y={Math.round(Math.min(k, d))} width="2" height={Math.max(1, Math.round(Math.abs(k - d)))} fill={k < d ? "#ff28ff" : "#80ffff"} />
    ))}
    {midKD.map(([k, d], i) => (
      <rect key={i} x={62 + STEP * i} y={Math.round(Math.min(k, d))} width="1" height={Math.max(1, Math.round(Math.abs(k - d)))} fill={k < d ? "#f00000" : "#2ca02c"} />
    ))}
    {faces.map(([x, y]) => (
      <Face key={x} x={x} y={y} />
    ))}
  </Plot>
);

const TrendChart = () => (
  <Plot top={684} height={128}>
    <Grid lines={[716]} />
    <line x1="62" x2="110%" y1="783.5" y2="783.5" stroke="#c00000" strokeDasharray="2 1" />
    {trend.map(([p, q], i) => {
      const zero = 783;
      const from = (p - zero) * (q - zero) < 0 ? zero : p;
      const x = 62 + STEP * i;
      return (
        <g key={i}>
          <rect x={x} y={Math.round(Math.min(p, zero))} width="1" height={Math.max(1, Math.round(Math.abs(p - zero)))} fill={p < zero + 1 ? "#ff0000" : "#5a00b4"} />
          {Math.abs(q - from) > 0.5 && (
            <rect x={x} y={Math.round(Math.min(from, q))} width="1" height={Math.max(1, Math.round(Math.abs(q - from)))} fill={q < from ? "#ffffff" : "#80ffc0"} />
          )}
        </g>
      );
    })}
  </Plot>
);

const ChampionChart = () => (
  <Plot top={813} height={132}>
    <Grid lines={[893]} />
    {champion.map((b) => (
      <rect key={b.i} x={63 + STEP * b.i} y={b.top} width="1" height={b.height} fill={b.up ? "#ff0000" : "#ffff00"} />
    ))}
  </Plot>
);

const Panel = ({ top, height, labels, legend, active, children }) => (
  <StPanel>
    <StScale height={height} $active={active}>
      {labels.map(([text, y]) => (
        <StScaleText key={text} x="57" y={y - top + 5}>
          {text}
        </StScaleText>
      ))}
    </StScale>
    <StPlotArea>
      {children}
      <StLegend>
        {legend.map(([text, color, bullets]) => (
          <StLegendItem key={text} $color={color}>
            {bullets && <StBullets>{bullets}</StBullets>}
            {text}
          </StLegendItem>
        ))}
      </StLegend>
    </StPlotArea>
  </StPanel>
);

/* ---------- page ---------- */

const App = () => {
  return (
    <StScreen>
      <GlobalStyle />
      <StMain>
        <StTopBar>
          <StTopTitle>
            美小麦连<StHalfWidth>(WHCC)&lt;</StHalfWidth>月线<StHalfWidth>&gt;</StHalfWidth>
          </StTopTitle>
          <StTools>
            <StToolLink href="#overlay">商品叠加</StToolLink>
            <StToolLink href="#period">周期</StToolLink>
            <StIcons>
              <StIconButton aria-label="向左">
                <svg width="16" height="14" shapeRendering="crispEdges" fill="none" stroke="currentColor">
                  <path d="M.5.5h15v13H.5zM2.5 6.5l3-4v2h8v5h-8v2l-3-4z" />
                </svg>
              </StIconButton>
              <StIconButton aria-label="向右">
                <svg width="16" height="14" shapeRendering="crispEdges" fill="none" stroke="currentColor">
                  <path d="M.5.5h15v13H.5zM13.5 6.5l-3-4v2h-8v5h8v2l3-4z" />
                </svg>
              </StIconButton>
              <StIconButton aria-label="布局">
                <svg width="16" height="14" shapeRendering="crispEdges" fill="none" stroke="currentColor">
                  <path d="M.5.5h15v13H.5zM10.5 1v12M1 9.5h9M12 3.5h2M12 5.5h2M12 7.5h2M12 9.5h2" />
                </svg>
              </StIconButton>
            </StIcons>
          </StTools>
        </StTopBar>

        <Panel
          top={19}
          height={406}
          labels={[["1200", 96], ["1000", 160], ["800", 224], ["600", 288], ["400", 352]]}
          legend={[
            ["K", "#c0c0c0"],
            ["胡家刀法", "#c0c0c0"],
            ["A:725.67 ", "#f00000"],
            ["MA13:753.44", "#ffffff"],
            ["MA21:813.87", "#ffff00"],
            ["MA55:666.92", "#ff00ff"],
            ["MA144:605.13", "#00ff00"],
            ["MA165:609.80", "#8080ff"],
            ["MA233:581.14", "#ff8000"],
            ["MA377:488.64", "#2a9fe0"],
          ]}
        >
          <PriceChart />
        </Panel>
        <Panel
          top={426}
          height={128}
          labels={[["0.8", 464], ["0.4", 508]]}
          legend={[
            ["亿万", "#c0c0c0", "●●●●●"],
            ["低位买进:0.0000", "#f00000"],
            ["高位抛出:0.0000", "#00ffff"],
          ]}
        >
          <SpikeChart />
        </Panel>
        <Panel
          top={555}
          height={128}
          labels={[["80", 587], ["40", 635]]}
          legend={[
            ["界文KDJ改进", "#c0c0c0"],
            ["短K:13.6268", "#ff80ff"],
            ["短D:16.1849", "#30e8d8"],
            ["中K:30.5017", "#e00000"],
            ["中D:51.1867", "#2ca02c"],
            ["底线:10.0000", "#ffffff"],
            ["顶线:90.0000", "#ffff00"],
          ]}
        >
          <KdjChart />
        </Panel>
        <Panel
          top={684}
          height={128}
          labels={[["120", 716], ["0", 783]]}
          legend={[
            ["大趋势", "#c0c0c0", "▲★"],
            ["获利回吐:1.9891", "#ffffff"],
            ["空头回补:0.0000", "#80ffc0"],
            ["坚绝做空:-15.8368", "#5a00b4"],
            ["买入持货:-0.0000", "#f00000"],
          ]}
        >
          <TrendChart />
        </Panel>
        <Panel
          top={813}
          height={132}
          active
          labels={[["0", 893]]}
          legend={[
            ["奥运冠军", "#c0c0c0", "★"],
            ["奥运:-27.9658", "#ffffff"],
            ["冠军:-32.8368", "#ffff00"],
          ]}
        >
          <ChampionChart />
        </Panel>

        <StDateBar>
          <StPeriod>月线</StPeriod>
          <StDates>
            {dates.map((d) => (
              <StDate key={d}>{d}</StDate>
            ))}
          </StDates>
        </StDateBar>
      </StMain>

      <StSide>
        <StSideHead>
          <StSideTitle>
            美小麦连<StCode>(WHCC)</StCode>
          </StSideTitle>
          <StCornerButton aria-label="窗口">
            <svg width="16" height="14" shapeRendering="crispEdges" fill="none" stroke="currentColor">
              <path d="M.5.5h15v13H.5zM3.5 3.5h9v7h-9zM3 4.5h10" />
            </svg>
          </StCornerButton>
        </StSideHead>
        <StMeter>
          <StMeterPart $share={2} $color="#ff3c3c" />
          <StMeterPart $share={3} $color="#00e000" />
        </StMeter>
        <StBook>
          <StLabel>卖出</StLabel>
          <StBookPrice>728.25</StBookPrice>
          <StBookSize>9</StBookSize>
        </StBook>
        <StBook>
          <StLabel>买入</StLabel>
          <StBookPrice>728.00</StBookPrice>
          <StBookSize>6</StBookSize>
        </StBook>
        <StQuotes>
          {quotes.map(([a, av, ac, b, bv, bc]) => (
            <React.Fragment key={a}>
              <StLabel>{a}</StLabel>
              <StNumber $tone={ac}>{av}</StNumber>
              <StLabel>{b}</StLabel>
              <StNumber $tone={bc}>{bv}</StNumber>
            </React.Fragment>
          ))}
        </StQuotes>
        <StUnits>
          <StLabel>单位</StLabel>
          <StUnitButton>元/吨</StUnitButton>
          <StUnitButton aria-pressed="true">
            <svg width="9" height="8" fill="none" stroke="#ffff00" strokeWidth="2">
              <path d="M1 3l3 3 4-5" />
            </svg>
            美分/蒲式耳
          </StUnitButton>
        </StUnits>
        <StTicks>
          <thead>
            <tr>
              <th>北京</th>
              <th>价格</th>
              <th>现手</th>
            </tr>
          </thead>
          <tbody>
            {ticks.map(([time, price, size, tone], i) => (
              <tr key={i}>
                <StTime $minor={time[0] === ":"}>{time}</StTime>
                <StCell $tone="up">{price}</StCell>
                <StCell $tone={tone === "r" ? "up" : "down"}>{size}</StCell>
              </tr>
            ))}
          </tbody>
        </StTicks>
        <StTabs>
          <StTab>笔</StTab>
          <StTabRest />
        </StTabs>
      </StSide>
    </StScreen>
  );
};

export default App;

const line = "1px solid #c0140c";
const tones = { up: "#ff3c3c", down: "#00f000", flat: "#f0f0f0", volume: "#ffff00" };

const GlobalStyle = createGlobalStyle`
  * {
    box-sizing: border-box;
  }
  body {
    margin: 0;
    background: #000;
    color: #e8e8e8;
    font-family: "Liberation Sans", "Noto Sans CJK SC", sans-serif;
  }
  button {
    padding: 0;
    border: 0;
    background: none;
    color: inherit;
    font: inherit;
    cursor: pointer;
  }
`;

const StScreen = styled.div`
  display: flex;
  min-height: 100vh;
`;

const StMain = styled.main`
  flex: 1;
  min-width: 0;
`;

const StTopBar = styled.header`
  display: flex;
  align-items: center;
  justify-content: space-between;
  height: 19px;
  padding-left: 2px;
  border-bottom: ${line};
  font-size: 12px;
  line-height: 18px;
`;

const StTopTitle = styled.div`
  font-family: "Noto Sans CJK SC", sans-serif;
`;

const StHalfWidth = styled.span`
  font-family: "Liberation Mono", monospace;
  font-size: 10px;
`;

const StTools = styled.nav`
  display: flex;
  align-items: center;
  gap: 21px;
`;

const StToolLink = styled.a`
  color: #80c0ff;
`;

const StIcons = styled.div`
  display: flex;
  gap: 1px;
  padding-right: 1px;
`;

const iconColor = css`
  display: flex;
  color: #80c0ff;
`;

const StIconButton = styled.button`
  ${iconColor}
`;

const StPanel = styled.section`
  display: flex;
  border-bottom: ${line};
`;

const StScale = styled.svg`
  flex: none;
  width: 62px;
  border-right: ${line};
  ${({ $active }) =>
    $active &&
    css`
      outline: 2px solid #c0140c;
      outline-offset: -1px;
    `}
`;

const StScaleText = styled.text`
  fill: #c0c0c0;
  font-size: 12px;
  font-weight: bold;
  text-anchor: end;
`;

const StPlotArea = styled.div`
  position: relative;
  flex: 1;
  min-width: 0;
`;

const StPlot = styled.svg`
  display: block;
  width: 100%;
`;

const StLegend = styled.div`
  position: absolute;
  top: 1px;
  left: 1px;
  display: flex;
  gap: 6px;
  font-family: "Noto Sans", "Noto Sans CJK SC", sans-serif;
  font-size: 12px;
  line-height: 18px;
  white-space: pre;
`;

const StLegendItem = styled.span`
  color: ${({ $color }) => $color};
`;

const StBullets = styled.span`
  font-family: "DejaVu Sans", sans-serif;
  font-size: 8px;
  vertical-align: 1px;
`;

const StFibText = styled.text`
  fill: #c0c0c0;
  font-family: "Noto Sans", sans-serif;
  font-size: 11px;
`;

const StMarkText = styled.text`
  fill: #f0f0f0;
  stroke: #000;
  stroke-width: 2px;
  paint-order: stroke;
  font-size: 12px;
  font-weight: bold;
`;

const StDateBar = styled.footer`
  display: flex;
  height: 15px;
  line-height: 15px;
`;

const StPeriod = styled.div`
  flex: none;
  width: 62px;
  padding-right: 4px;
  border-right: ${line};
  font-size: 12px;
  text-align: right;
`;

const StDates = styled.div`
  display: flex;
  min-width: 0;
  overflow: hidden;
  font-size: 11px;
`;

const StDate = styled.span`
  flex: none;
  width: 56px;
`;

const StSide = styled.aside`
  display: flex;
  flex: none;
  flex-direction: column;
  width: 241px;
  border-left: ${line};
`;

const StSideHead = styled.div`
  position: relative;
  display: flex;
  justify-content: center;
  height: 25px;
  padding-right: 12px;
  border-bottom: ${line};
`;

const StSideTitle = styled.h1`
  margin: 0;
  color: #ffff00;
  font-size: 20px;
  font-weight: normal;
  line-height: 24px;
`;

const StCode = styled.span`
  font-family: "Liberation Mono", monospace;
  font-size: 16px;
`;

const StCornerButton = styled.button`
  ${iconColor}
  position: absolute;
  top: 1px;
  right: 1px;
`;

const StMeter = styled.div`
  display: flex;
  height: 5px;
  padding: 0 1px;
  border-bottom: ${line};
`;

const StMeterPart = styled.div`
  flex: ${({ $share }) => $share};
  background: ${({ $color }) => $color};
`;

const StBook = styled.div`
  display: grid;
  grid-template-columns: 44px 65px 14px 1fr;
  align-items: center;
  height: 31px;
  padding: 0 4px;
  border-bottom: ${line};
  font-weight: bold;
  line-height: 30px;
`;

const StLabel = styled.span`
  font-size: 14px;
  font-weight: normal;
`;

const StBookPrice = styled.span`
  color: #ff3c3c;
  font-size: 21px;
`;

const StBookSize = styled.span`
  grid-column: 4;
  color: #ffff00;
  font-size: 21px;
`;

const StQuotes = styled.div`
  display: grid;
  grid-template-columns: 44px 65px 42px 1fr;
  height: 101px;
  padding: 0 4px;
  border-bottom: ${line};
  line-height: 20px;

  ${StLabel}:nth-child(4n + 3) {
    padding-left: 14px;
  }
`;

const StNumber = styled.span`
  color: ${({ $tone }) => tones[$tone]};
  font-size: 14px;
  font-weight: bold;
  text-align: right;
`;

const StUnits = styled.div`
  display: grid;
  grid-template-columns: 44px 65px 1fr;
  align-items: center;
  height: 21px;
  padding: 0 4px;
  border-bottom: ${line};
  background: #4b4b4b;
  line-height: 20px;
`;

const StUnitButton = styled.button`
  display: flex;
  align-items: center;
  justify-content: flex-end;
  gap: 6px;
  && {
    font-family: "Liberation Mono", "Noto Sans CJK SC", monospace;
    font-size: 14px;
  }
`;

const StTicks = styled.table`
  width: 100%;
  border-collapse: collapse;
  table-layout: fixed;
  font-size: 14px;
  line-height: 22px;

  th,
  td {
    height: 22px;
    padding: 0 4px;
    text-align: right;
    vertical-align: top;
  }
  th {
    color: #808080;
    font-weight: normal;
  }
  th:first-child {
    width: 45px;
    text-align: left;
  }
  th:nth-child(2) {
    width: 101px;
  }
`;

const StTime = styled.td`
  color: #f0f0f0;
  font-weight: bold;
  ${({ $minor }) =>
    $minor &&
    css`
      && {
        padding-right: 7px;
      }
      font-size: 12px;
      font-weight: normal;
    `}
`;

const StCell = styled.td`
  color: ${({ $tone }) => tones[$tone]};
  font-weight: bold;
`;

const StTabs = styled.div`
  display: flex;
  height: 16px;
  margin-top: auto;
`;

const StTab = styled.button`
  width: 37px;
  border-right: ${line};
  border-bottom: ${line};
  border-radius: 0 0 3px 3px;
  font-size: 12px;
  line-height: 15px;
`;

const StTabRest = styled.div`
  flex: 1;
  border-top: ${line};
`;
